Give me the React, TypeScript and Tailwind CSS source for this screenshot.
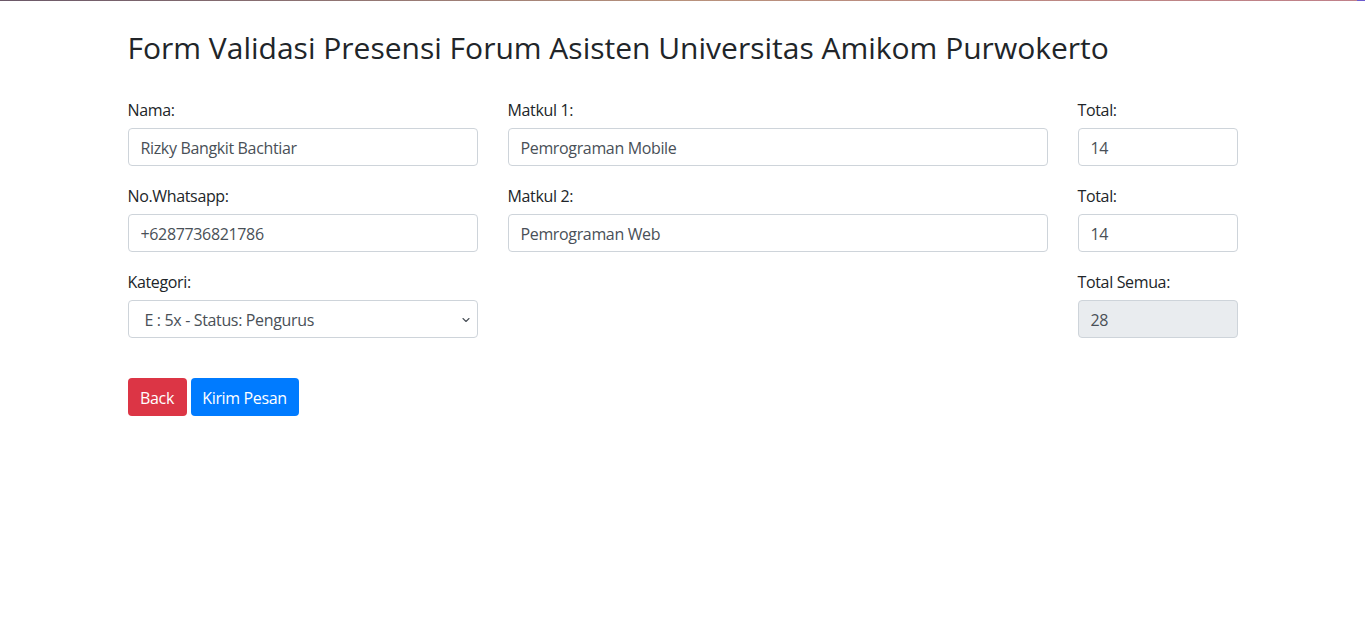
import { ChevronDown } from "lucide-react";

function Field({ label, value, disabled }: { label: string; value: string; disabled?: boolean }) {
  return (
    <div className="mb-4">
      <label className="block mb-2 pt-[2px] h-6 leading-6 text-[16px] tracking-[-0.35px] text-[#212529]">{label}</label>
      <input
        readOnly
        value={value}
        className={
          "block w-full h-[38px] px-3 pt-[2px] rounded-[4px] border border-[#ced4da] text-[16px] tracking-[-0.35px] text-[#495057] outline-none " +
          (disabled ? "bg-[#e9ecef]" : "bg-white")
        }
      />
    </div>
  );
}

export default function App() {
  return (
    <div className="min-h-screen bg-white" style={{ fontFamily: '"Open Sans", "Noto Sans", sans-serif' }}>
      <div className="h-px bg-gradient-to-r from-[#6b5868] via-[#b8927c] to-[#c0808a]">
        <div className="ml-auto h-px w-[8px] bg-[#6a5acd]" />
      </div>
      <div className="mx-auto w-[1140px] px-[15px] pt-[28px]">
        <h2 className="text-[30px] leading-[38px] font-normal text-[#212529] mb-[29px]">
          Form Validasi Presensi Forum Asisten Universitas Amikom Purwokerto
        </h2>
        <div className="grid grid-cols-[350px_540px_160px] gap-x-[30px]">
          <div>
            <Field label="Nama:" value="Rizky Bangkit Bachtiar" />
            <Field label="No.Whatsapp:" value="+6287736821786" />
            <div className="mb-4">
              <label className="block mb-2 pt-[2px] h-6 leading-6 text-[16px] tracking-[-0.35px] text-[#212529]">Kategori:</label>
              <div className="relative">
                <select className="block w-full h-[38px] pl-4 pr-8 pt-[2px] appearance-none rounded-[4px] border border-[#ced4da] bg-white text-[16px] tracking-[-0.35px] text-[#495057] outline-none">
                  <option>E : 5x - Status: Pengurus</option>
                </select>
                <ChevronDown className="absolute right-[6px] top-[14px] w-[12px] h-[12px] text-[#495057]" strokeWidth={2.2} />
              </div>
            </div>
          </div>
          <div>
            <Field label="Matkul 1:" value="Pemrograman Mobile" />
            <Field label="Matkul 2:" value="Pemrograman Web" />
          </div>
          <div>
            <Field label="Total:" value="14" />
            <Field label="Total:" value="14" />
            <Field label="Total Semua:" value="28" disabled />
          </div>
        </div>
        <div className="flex gap-1 mt-6">
          <button className="h-[38px] w-[59px] pt-[2px] rounded-[4px] bg-[#dc3545] text-white text-[16px] tracking-[-0.35px]">Back</button>
          <button className="h-[38px] w-[108px] pt-[2px] rounded-[4px] bg-[#007bff] text-white text-[16px] tracking-[-0.35px]">Kirim Pesan</button>
        </div>
      </div>
    </div>
  );
}
